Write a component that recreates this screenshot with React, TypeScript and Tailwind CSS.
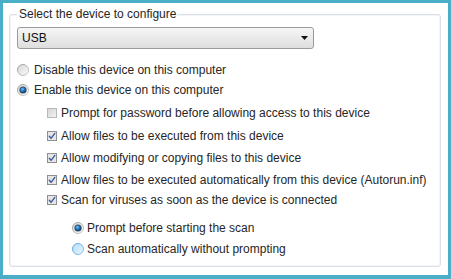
import React from "react";

const font = { fontFamily: '"Liberation Sans", Arial, sans-serif' };

function Radio({ variant, id }: { variant: "off" | "on" | "hover"; id: string }) {
  return (
    <svg width="12" height="12" viewBox="0 0 12 12" className="shrink-0">
      <defs>
        <linearGradient id={id + "r"} x1="0" y1="0" x2="1" y2="1">
          <stop offset="0" stopColor={variant === "hover" ? "#5aa7e0" : "#9a9a9a"} />
          <stop offset="1" stopColor={variant === "hover" ? "#8cc4ee" : "#d0d0d0"} />
        </linearGradient>
        <linearGradient id={id + "f"} x1="0" y1="0" x2="1" y2="1">
          <stop offset="0" stopColor={variant === "hover" ? "#b6dcf8" : "#d8d8d8"} />
          <stop offset="1" stopColor={variant === "hover" ? "#e8f5fe" : "#f8f8f8"} />
        </linearGradient>
        <radialGradient id={id + "d"} cx="0.4" cy="0.35" r="0.7">
          <stop offset="0" stopColor="#7fc6f5" />
          <stop offset="0.5" stopColor="#1d77c8" />
          <stop offset="1" stopColor="#0c3e78" />
        </radialGradient>
      </defs>
      <circle cx="6" cy="6" r="5.5" fill={`url(#${id}f)`} stroke={`url(#${id}r)`} strokeWidth="1" />
      {variant === "on" && (
        <>
          <circle cx="6" cy="6" r="3.6" fill="#3d4a57" />
          <circle cx="6" cy="6" r="2.8" fill={`url(#${id}d)`} />
        </>
      )}
    </svg>
  );
}

function Check({ checked }: { checked: boolean }) {
  return (
    <svg width="10" height="10" viewBox="0 0 10 10" className="shrink-0">
      <defs>
        <linearGradient id="cbf" x1="0" y1="0" x2="1" y2="1">
          <stop offset="0" stopColor="#d4d4d4" />
          <stop offset="1" stopColor="#f4f4f4" />
        </linearGradient>
      </defs>
      <rect x="0.5" y="0.5" width="9" height="9" fill={checked ? "#e6e6e6" : "url(#cbf)"} stroke={checked ? "#8e8f8f" : "#b8b8b8"} />
      {checked && (
        <path d="M2.3 5.2 L4.1 7.3 L7.8 2.4" fill="none" stroke="#3c5a9e" strokeWidth="1.4" strokeLinecap="round" strokeLinejoin="round" />
      )}
    </svg>
  );
}

export default function App() {
  const checks: [string, boolean, string][] = [
    ["Prompt for password before allowing access to this device", false, "h-[22px]"],
    ["Allow files to be executed from this device", true, "h-[23px]"],
    ["Allow modifying or copying files to this device", true, "h-[22px]"],
    ["Allow files to be executed automatically from this device (Autorun.inf)", true, "h-[21px]"],
    ["Scan for viruses as soon as the device is connected", true, "h-[19px]"],
  ];
  return (
    <div className="w-[451px] h-[279px] bg-[#4aaec9] pt-[3px] pl-[3px] pr-[3px] pb-[4px]" style={font}>
      <div className="bg-white h-full pt-[4px] pl-[6px] pr-[7px] text-[12px] text-[#262626] leading-[14px]">
        <fieldset className="h-[260px] border border-[#d9e0e7] rounded-[3px] shadow-[inset_0_0_0_1px_#f3f5f8]">
          <legend className="ml-[7px] px-[2px] leading-[14px]">Select the device to configure</legend>
          <div className="pl-[7px] pt-[6px] flex flex-col">
            <div className="w-[297px] h-[22px] border border-[#9b9b9b] rounded-[3px] bg-gradient-to-b from-[#f6f6f6] to-[#dedede] flex items-center justify-between pl-[4px] pr-[4px]">
              <span className="text-[#111]">USB</span>
              <svg width="8" height="5" viewBox="0 0 8 5"><path d="M0 0 H7 L3.5 4 Z" fill="#111" /></svg>
            </div>
            <div className="mt-[11px] h-[20px] flex items-center gap-[5px]">
              <Radio variant="off" id="r1" />
              <span>Disable this device on this computer</span>
            </div>
            <div className="h-[20px] flex items-center gap-[5px]">
              <Radio variant="on" id="r2" />
              <span>Enable this device on this computer</span>
            </div>
            <div className="mt-[2px] pl-[30px] flex flex-col">
              {checks.map(([t, c, h]) => (
                <div key={t} className={`${h} flex items-center gap-[4px]`}>
                  <Check checked={c} />
                  <span>{t}</span>
                </div>
              ))}
            </div>
            <div className="mt-[8.5px] pl-[55px] flex flex-col">
              <div className="h-[21px] flex items-center gap-[3px]">
                <Radio variant="on" id="r3" />
                <span>Prompt before starting the scan</span>
              </div>
              <div className="h-[21px] flex items-center gap-[3px]">
                <Radio variant="hover" id="r4" />
                <span>Scan automatically without prompting</span>
              </div>
            </div>
          </div>
        </fieldset>
      </div>
    </div>
  );
}
